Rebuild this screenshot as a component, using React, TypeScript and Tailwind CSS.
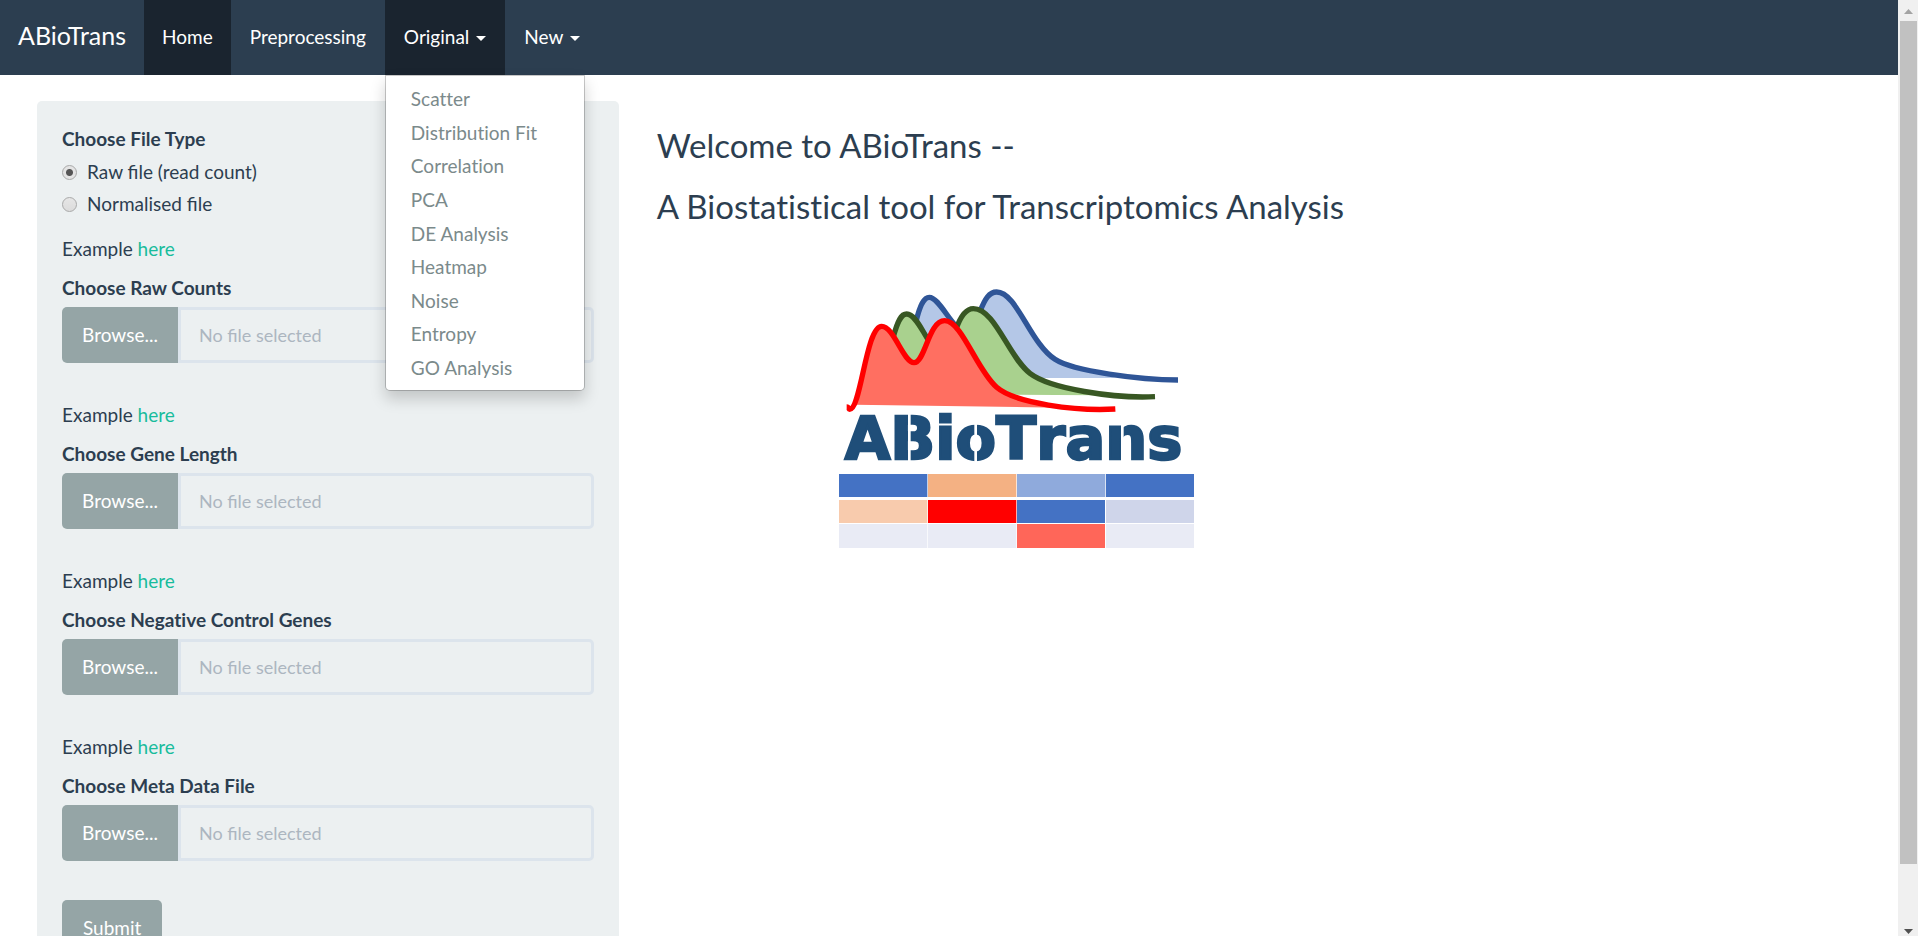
import React from "react";

const originalItems = [
  "Scatter",
  "Distribution Fit",
  "Correlation",
  "PCA",
  "DE Analysis",
  "Heatmap",
  "Noise",
  "Entropy",
  "GO Analysis",
];

const uploads = [
  { id: "raw-counts", label: "Choose Raw Counts" },
  { id: "gene-length", label: "Choose Gene Length" },
  { id: "negative-control", label: "Choose Negative Control Genes" },
  { id: "meta-data", label: "Choose Meta Data File" },
];

function Caret() {
  return (
    <svg className="ml-[7px] mt-1 h-[5px] w-[10px]" viewBox="0 0 10 5" aria-hidden="true">
      <path d="M0 0h10L5 5z" fill="currentColor" />
    </svg>
  );
}

function Navbar() {
  return (
    <nav className="flex h-[75px] shrink-0 bg-[#2c3e50] text-[19px] leading-[27px] text-white [font-variant-ligatures:none]">
      <a href="#" className="flex items-center px-[18px] pb-[5px] text-[25px]">
        ABioTrans
      </a>
      <a href="#home" className="flex items-center bg-[#1a242f] px-[18px] pb-[2px]">
        Home
      </a>
      <a href="#preprocessing" className="flex items-center px-[19px] pb-[2px]">
        Preprocessing
      </a>
      <div className="relative flex">
        <button type="button" aria-expanded="true" className="flex items-center bg-[#1a242f] px-[19px] pb-[2px]">
          Original
          <Caret />
        </button>
        <ul className="absolute left-0 top-full z-10 flex h-[316px] w-[200px] flex-col rounded-b-[5px] border border-black/20 bg-white bg-clip-padding py-[6px] shadow-[0_8px_15px_rgba(0,0,0,0.175)]">
          {originalItems.map((item) => (
            <li key={item} className="flex flex-1 items-center">
              <a href="#original" className="px-[25px] text-[#7b8a8b]">
                {item}
              </a>
            </li>
          ))}
        </ul>
      </div>
      <button type="button" className="flex items-center px-[19px] pb-[2px]">
        New
        <Caret />
      </button>
    </nav>
  );
}

function FileTypeOption({ label, checked }: { label: string; checked?: boolean }) {
  return (
    <label className="flex h-8 items-center gap-[10px]">
      <input
        type="radio"
        name="file-type"
        defaultChecked={checked}
        className="size-[15px] appearance-none rounded-full border border-[#a9a9a9] bg-linear-to-b from-[#e6e6e6] to-[#dcdcdc] checked:bg-[radial-gradient(circle,#555_0_3px,#e4e4e4_4px)]"
      />
      {label}
    </label>
  );
}

function Upload({ id, label }: { id: string; label: string }) {
  return (
    <div className="flex flex-col pb-[39px]">
      <p className="h-[26px]">
        Example{" "}
        <a href="#example" className="text-[#18bc9c]">
          here
        </a>
      </p>
      <label htmlFor={id} className="mt-[13px] font-bold [font-variant-ligatures:none]">
        {label}
      </label>
      <div className="mt-[6px] flex h-14">
        <button type="button" className="w-[116px] shrink-0 rounded-l-[5px] bg-[#95a5a6] text-center text-white">
          Browse...
        </button>
        <input
          id={id}
          type="text"
          readOnly
          placeholder="No file selected"
          className="min-w-0 flex-1 rounded-r-[5px] border-[3px] border-[#dce4ec] bg-transparent px-[18px] text-lg placeholder:text-[#acb6c0]"
        />
      </div>
    </div>
  );
}

function Logo() {
  return (
    <svg className="h-[290px] w-[400px]" viewBox="0 0 1200 870" role="img" aria-label="ABioTrans logo">
      <path d="M285 160C300 105 312 82 328 82C350 82 375 130 400 160L470 140C490 90 508 66 530 66C590 66 630 220 705 268C745 292 800 305 890 324L640 324L400 300Z" fill="#b4c7e7" />
      <path d="M405 165L475 135L475 60L405 60Z" fill="#ffffff" />
      <path d="M288 155C300 105 312 82 328 82C350 82 375 130 405 165M480 125C495 86 508 66 530 66C590 66 630 220 705 268C760 304 960 330 1074 330" fill="none" stroke="#2f5597" strokeWidth="16" />
      <path d="M215 200C232 150 244 132 260 132C285 132 305 180 325 205L405 175C422 132 440 116 460 116C525 116 565 260 630 310C672 342 740 355 830 376L590 374L300 350Z" fill="#a9d18e" />
      <path d="M220 200C234 150 244 132 260 132C285 132 305 180 325 210M408 178C424 132 440 116 460 116C525 116 565 260 630 310C690 356 880 386 1005 380" fill="none" stroke="#385723" strokeWidth="16" />
      <path d="M104 404C132 320 145 169 185 169C222 169 250 278 282 278C316 278 325 152 374 152C425 152 470 300 530 352C570 385 640 398 720 413Z" fill="#ff6f61" />
      <path d="M80 411C87 411 85 418 89 418C123 418 138 169 185 169C222 169 250 278 282 278C316 278 325 152 374 152C425 152 470 300 530 352C585 400 770 424 886 417" fill="none" stroke="#ff0000" strokeWidth="16" />
      <text
        x="74"
        y="567"
        fill="#1f4e79"
        stroke="#1f4e79"
        strokeWidth="7"
        className="font-['DejaVu_Sans'] text-[177px] font-bold [font-kerning:none]"
      >
        ABioTrans
      </text>
      <path d="M268 430v144M467 462v114M907 462v114" stroke="#ffffff" strokeWidth="8" />
      <g>
        <path d="M57 612h265v69H57zM858 612h264v69H858zM591 690h264v69H591z" fill="#4472c4" />
        <path d="M324 612h265v69H324z" fill="#f4b183" />
        <path d="M591 612h265v69H591z" fill="#8faadc" />
        <path d="M57 690h265v69H57z" fill="#f8cbad" />
        <path d="M324 690h265v69H324z" fill="#ff0000" />
        <path d="M858 690h264v69H858z" fill="#cfd5ea" />
        <path d="M57 762h265v72H57zM324 762h265v72H324zM858 762h264v72H858z" fill="#e9ebf5" />
        <path d="M591 762h264v72H591z" fill="#ff6659" />
      </g>
    </svg>
  );
}

function ScrollTrack() {
  return (
    <div aria-hidden="true" className="flex w-5 shrink-0 flex-col items-center bg-[#f0f0f0]">
      <svg className="h-[21px] w-[9px]" viewBox="0 0 9 21">
        <path d="M0 14L4.500 9L9 14z" fill="#a3a3a3" />
      </svg>
      <div className="w-[17px] grow bg-[#c1c1c1]" />
      <div className="h-[51px]" />
      <svg className="h-[21px] w-[9px]" viewBox="0 0 9 21">
        <path d="M0 14h9L4.500 19z" fill="#505050" />
      </svg>
    </div>
  );
}

export default function App() {
  return (
    <div className="flex h-screen overflow-hidden bg-white font-['Lato',sans-serif] text-[19px] leading-[26px] text-[#2c3e50]">
      <div className="flex min-w-0 flex-1 flex-col">
        <Navbar />
        <main className="flex items-start pt-[26px]">
          <div className="w-1/3 shrink-0 pl-[37px] pr-[14px]">
            <form className="rounded-[5px] bg-[#ecf0f1] px-[25px] pb-6 pt-[25px]">
              <fieldset className="pb-4">
                <legend className="pb-1 font-bold">Choose File Type</legend>
                <FileTypeOption label="Raw file (read count)" checked />
                <FileTypeOption label="Normalised file" />
              </fieldset>
              {uploads.map((u) => (
                <Upload key={u.id} id={u.id} label={u.label} />
              ))}
              <button type="button" className="h-14 rounded-[5px] bg-[#95a5a6] px-[21px] text-white">
                Submit
              </button>
            </form>
          </div>
          <div className="flex flex-1 flex-col gap-[25px] pl-6 pt-[26px] [font-variant-ligatures:none]">
            <h3 className="text-[33px] leading-9">Welcome to ABioTrans --</h3>
            <h3 className="text-[33px] leading-9">A Biostatistical tool for Transcriptomics Analysis</h3>
            <div className="pl-[163px] pt-[21px]">
              <Logo />
            </div>
          </div>
        </main>
      </div>
      <ScrollTrack />
    </div>
  );
}
